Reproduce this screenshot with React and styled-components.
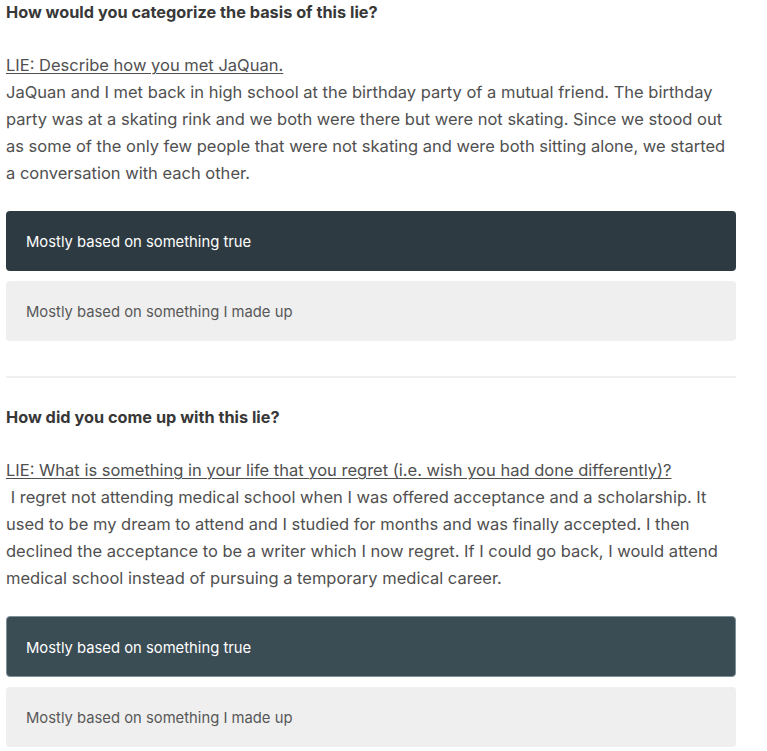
import React from "react";
import styled, { createGlobalStyle } from "styled-components";

const Global = createGlobalStyle`
  body {
    margin: 0;
    background: #fff;
    font-family: "Inter", "Liberation Sans", sans-serif;
    color: #444;
  }
`;

const Page = styled("div")`
  padding: 0 31px 0 6px;
`;

const Question = styled("section")`
  display: flex;
  flex-direction: column;
`;

const Heading = styled("h2")`
  margin: 0 0 28px;
  font-size: 16.3px;
  line-height: 24px;
  font-weight: 700;
  color: #383838;
`;

const Story = styled("p")`
  margin: 0 0 24px;
  font-size: 16.5px;
  line-height: 27px;
  font-weight: 400;
  color: #505050;
`;

const Prompt = styled("span")`
  display: block;
  text-decoration: underline;
  text-underline-offset: 2px;
  text-decoration-thickness: 1px;
`;

const Options = styled("div")`
  display: flex;
  flex-direction: column;
  gap: 10px;
`;

const Option = styled("button")`
  display: flex;
  align-items: center;
  height: ${p => (p.focused ? "61px" : "60px")};
  padding: 2px 20px 0;
  border-radius: 4px;
  border: ${p => (p.focused ? "1px solid #7f9099" : "none")};
  padding-left: ${p => (p.focused ? "19px" : "20px")};
  background: ${p => (p.selected ? (p.focused ? "#3a4c54" : "#2e3a41") : "#efefef")};
  color: ${p => (p.selected ? "#fff" : "#585858")};
  font-family: inherit;
  font-size: 14.8px;
  text-align: left;
  cursor: pointer;
`;

const Divider = styled("hr")`
  margin: 35px 0 27px;
  border: none;
  height: 2px;
  background: #f0f0f0;
`;

const questions = [
  {
    heading: "How would you categorize the basis of this lie?",
    prompt: "LIE: Describe how you met JaQuan.",
    story:
      "JaQuan and I met back in high school at the birthday party of a mutual friend. The birthday party was at a skating rink and we both were there but were not skating. Since we stood out as some of the only few people that were not skating and were both sitting alone, we started a conversation with each other.",
  },
  {
    heading: "How did you come up with this lie?",
    prompt:
      "LIE: What is something in your life that you regret (i.e. wish you had done differently)?",
    story:
      "\u00a0I regret not attending medical school when I was offered acceptance and a scholarship. It used to be my dream to attend and I studied for months and was finally accepted. I then declined the acceptance to be a writer which I now regret. If I could go back, I would attend medical school instead of pursuing a temporary medical career.",
    focused: true,
  },
];

export default function App() {
  return (
    <Page>
      <Global />
      {questions.map((q, i) => (
        <React.Fragment key={i}>
          {i > 0 && <Divider />}
          <Question>
            <Heading>{q.heading}</Heading>
            <Story>
              <Prompt>{q.prompt}</Prompt>
              {q.story}
            </Story>
            <Options>
              <Option selected focused={q.focused}>
                Mostly based on something true
              </Option>
              <Option>Mostly based on something I made up</Option>
            </Options>
          </Question>
        </React.Fragment>
      ))}
    </Page>
  );
}
